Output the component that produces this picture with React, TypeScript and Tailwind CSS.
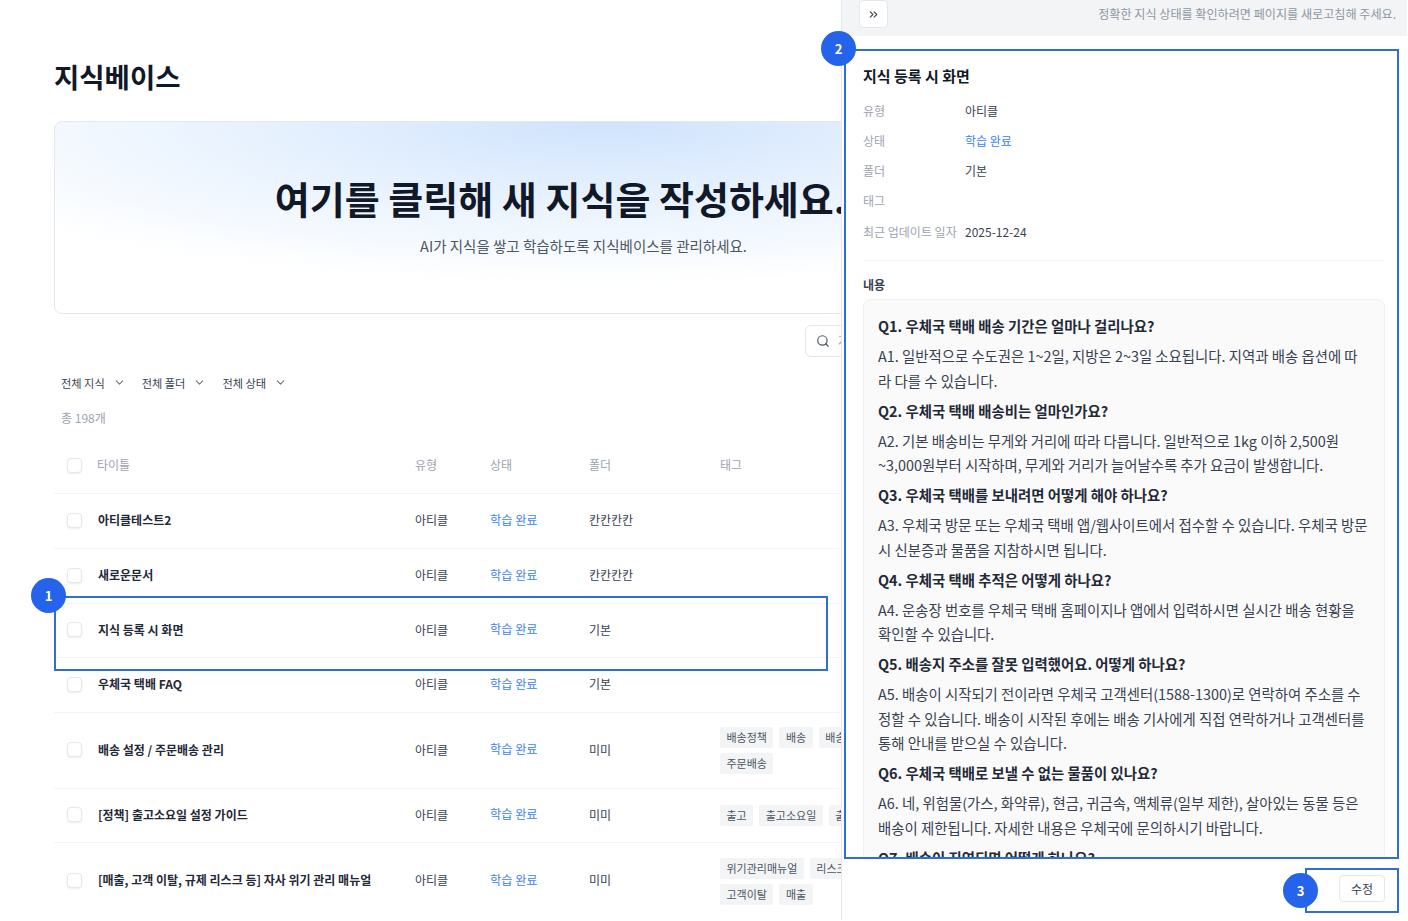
import { ChevronDown, ChevronsRight, Search } from "lucide-react";

const font = "font-['Noto_Sans_CJK_KR','Noto_Sans',sans-serif]";

type Row = { title: string; folder: string; h: string; tags?: string[][] };

const rows: Row[] = [
  { title: "아티클테스트2", folder: "칸칸칸칸", h: "h-[55px]" },
  { title: "새로운문서", folder: "칸칸칸칸", h: "h-[55px]" },
  { title: "지식 등록 시 화면", folder: "기본", h: "h-[54px]" },
  { title: "우체국 택배 FAQ", folder: "기본", h: "h-[55px]" },
  { title: "배송 설정 / 주문배송 관리", folder: "미미", h: "h-[76px]", tags: [["배송정책", "배송", "배송설정"], ["주문배송"]] },
  { title: "[정책] 출고소요일 설정 가이드", folder: "미미", h: "h-[54px]", tags: [["출고", "출고소요일", "출고지연"]] },
  { title: "[매출, 고객 이탈, 규제 리스크 등] 자사 위기 관리 매뉴얼", folder: "미미", h: "h-[76px]", tags: [["위기관리매뉴얼", "리스크관리"], ["고객이탈", "매출"]] },
];

const qa: [string, string][] = [
  ["Q1. 우체국 택배 배송 기간은 얼마나 걸리나요?", "A1. 일반적으로 수도권은 1~2일, 지방은 2~3일 소요됩니다. 지역과 배송 옵션에 따라 다를 수 있습니다."],
  ["Q2. 우체국 택배 배송비는 얼마인가요?", "A2. 기본 배송비는 무게와 거리에 따라 다릅니다. 일반적으로 1kg 이하 2,500원 ~3,000원부터 시작하며, 무게와 거리가 늘어날수록 추가 요금이 발생합니다."],
  ["Q3. 우체국 택배를 보내려면 어떻게 해야 하나요?", "A3. 우체국 방문 또는 우체국 택배 앱/웹사이트에서 접수할 수 있습니다. 우체국 방문 시 신분증과 물품을 지참하시면 됩니다."],
  ["Q4. 우체국 택배 추적은 어떻게 하나요?", "A4. 운송장 번호를 우체국 택배 홈페이지나 앱에서 입력하시면 실시간 배송 현황을 확인할 수 있습니다."],
  ["Q5. 배송지 주소를 잘못 입력했어요. 어떻게 하나요?", "A5. 배송이 시작되기 전이라면 우체국 고객센터(1588-1300)로 연락하여 주소를 수정할 수 있습니다. 배송이 시작된 후에는 배송 기사에게 직접 연락하거나 고객센터를 통해 안내를 받으실 수 있습니다."],
  ["Q6. 우체국 택배로 보낼 수 없는 물품이 있나요?", "A6. 네, 위험물(가스, 화약류), 현금, 귀금속, 액체류(일부 제한), 살아있는 동물 등은 배송이 제한됩니다. 자세한 내용은 우체국에 문의하시기 바랍니다."],
  ["Q7. 배송이 지연되면 어떻게 하나요?", "A7. 우체국 고객센터로 문의해 주시면 확인해 드립니다."],
];

const meta: [string, string, string, string][] = [
  ["유형", "아티클", "text-[#374151]", "h-[30px]"],
  ["상태", "학습 완료", "text-[#3b82f6]", "h-[30px]"],
  ["폴더", "기본", "text-[#374151]", "h-[30px]"],
  ["태그", "", "", "h-[30px]"],
  ["최근 업데이트 일자", "2025-12-24", "text-[#374151]", "h-[32px]"],
];

function Checkbox() {
  return <span className="block w-[15px] h-[15px] rounded-[4px] border border-[#e5e7eb] bg-white shadow-[0_1px_2px_rgba(0,0,0,0.08)]" />;
}

function Badge({ n, className }: { n: number; className: string }) {
  return (
    <span className={"absolute flex items-center justify-center w-[35px] h-[35px] rounded-full bg-[#2563eb] text-white text-[13px] font-semibold " + className}>
      {n}
    </span>
  );
}

export default function App() {
  return (
    <div className={"relative flex w-[1408px] h-[921px] overflow-hidden bg-white " + font}>
      <main className="w-[841px] shrink-0 overflow-hidden pl-[54px] pt-[57px]">
        <div className="w-[1059px]">
          <h1 className="text-[27.5px] leading-[38px] font-bold text-[#111827]">지식베이스</h1>
          <div className="mt-[26px] h-[193px] rounded-[8px] border border-[#e5e7eb] bg-[radial-gradient(ellipse_70%_85%_at_52%_0%,#cfe3fd_0%,#e6f1fe_45%,#ffffff_100%)] flex flex-col items-center pt-[50px]">
            <p className="mr-[46px] text-[38px] leading-[52px] font-bold text-[#111827]">여기를 클릭해 새 지식을 작성하세요.</p>
            <p className="mt-[12px] text-[14.5px] leading-[20px] text-[#4b5563]">AI가 지식을 쌓고 학습하도록 지식베이스를 관리하세요.</p>
          </div>
          <div className="mt-[11px] h-[32px] pl-[751px]">
            <div className="w-[200px] h-[32px] rounded-[6px] border border-[#e5e7eb] flex items-center gap-[8px] pl-[10px] text-[12px] text-[#9ca3af]">
              <Search size={14} className="text-[#4b5563]" />
              지식 검색
            </div>
          </div>
          <div className="mt-[16px] h-[20px] pl-[7px] flex items-center gap-[16px] text-[11.2px] text-[#374151]">
            {["전체 지식", "전체 폴더", "전체 상태"].map((f) => (
              <span key={f} className="flex items-center gap-[8px]">
                {f}
                <ChevronDown size={13} className="text-[#6b7280]" />
              </span>
            ))}
          </div>
          <div className="mt-[15px] h-[20px] pl-[7px] text-[12px] leading-[20px] text-[#9ca3af]">총 198개</div>

          <div className="mt-[11px] flex items-center h-[55px] pb-[2px] border-b border-[#f3f4f6] text-[12px] text-[#9ca3af]">
            <div className="w-[43px] pl-[13px]"><Checkbox /></div>
            <div className="w-[318px]">타이틀</div>
            <div className="w-[75px]">유형</div>
            <div className="w-[99px]">상태</div>
            <div className="w-[131px]">폴더</div>
            <div>태그</div>
          </div>
          {rows.map((r) => (
            <div key={r.title} className={"flex items-center pb-[2px] border-b last:border-b-0 border-[#f3f4f6] text-[12px] text-[#374151] " + r.h}>
              <div className="w-[44px] pl-[13px]"><Checkbox /></div>
              <div className="w-[317px] font-bold text-[#1f2937]">{r.title}</div>
              <div className="w-[75px]">아티클</div>
              <div className="w-[99px] text-[12.2px] text-[#3b82f6]">학습 완료</div>
              <div className="w-[131px]">{r.folder}</div>
              {r.tags && (
                <div className="flex flex-col gap-[5px] mt-[2px]">
                  {r.tags.map((line) => (
                    <div key={line[0]} className="flex gap-[6px]">
                      {line.map((t) => (
                        <span key={t} className="h-[21px] px-[6.5px] rounded-[2px] bg-[#f3f4f6] text-[11px] leading-[21px] text-[#4b5563]">{t}</span>
                      ))}
                    </div>
                  ))}
                </div>
              )}
            </div>
          ))}
        </div>
      </main>

      <aside className="w-[566px] shrink-0 h-[920px] flex flex-col border-l border-[#e5e7eb] bg-white">
        <div className="h-[36px] shrink-0 bg-[#f3f4f6] flex items-start justify-between pl-[17px] pr-[11px]">
          <button className="w-[29px] h-[28px] rounded-[4px] border border-[#e5e7eb] bg-white flex items-center justify-center text-[#374151]">
            <ChevronsRight size={13} />
          </button>
          <span className="mt-[5px] text-[12.1px] leading-[18px] text-[#8f96a3]">정확한 지식 상태를 확인하려면 페이지를 새로고침해 주세요.</span>
        </div>
        <div className="h-[821px] shrink-0 overflow-hidden pl-[21px] pr-[22px] pt-[29px]">
          <h2 className="text-[15px] leading-[22px] font-bold text-[#111827]">지식 등록 시 화면</h2>
          <dl className="mt-[9px] flex flex-col">
            {meta.map(([k, v, c, h]) => (
              <div key={k} className={"flex items-center text-[12px] " + h}>
                <dt className="w-[102px] text-[#9ca3af] whitespace-nowrap">{k}</dt>
                <dd className={c}>{v}</dd>
              </div>
            ))}
          </dl>
          <div className="mt-[12px] border-t border-[#f3f4f6]" />
          <div className="mt-[15px] text-[12px] leading-[18px] font-semibold text-[#374151]">내용</div>
          <div className="mt-[5px] rounded-[8px] border border-[#f0f0f0] bg-[#fafafa] pl-[14px] pr-[14px] pt-[14px]">
            {qa.map(([q, a]) => (
              <div key={q}>
                <p className="mb-[5.5px] text-[14.4px] leading-[24.5px] font-bold text-[#1f2937]">{q}</p>
                <p className="mb-[5.5px] text-[14.4px] leading-[24.5px] text-[#374151]">{a}</p>
              </div>
            ))}
          </div>
        </div>
        <div className="flex-1 flex justify-end items-start pt-[18px] pr-[22px]">
          <button className="w-[46px] h-[27px] rounded-[4px] border border-[#e5e7eb] bg-white text-[12px] text-[#374151]">수정</button>
        </div>
      </aside>

      <div className="absolute left-[54px] top-[596px] w-[774px] h-[75px] border-2 border-[#2f6fd0]" />
      <div className="absolute left-[844px] top-[49px] w-[555px] h-[810px] border-2 border-[#2f6fd0]" />
      <div className="absolute left-[1305px] top-[868px] w-[94px] h-[45px] border-2 border-[#2f6fd0]" />
      <Badge n={1} className="left-[31px] top-[578px]" />
      <Badge n={2} className="left-[821px] top-[31px]" />
      <Badge n={3} className="left-[1283px] top-[873px]" />
    </div>
  );
}
